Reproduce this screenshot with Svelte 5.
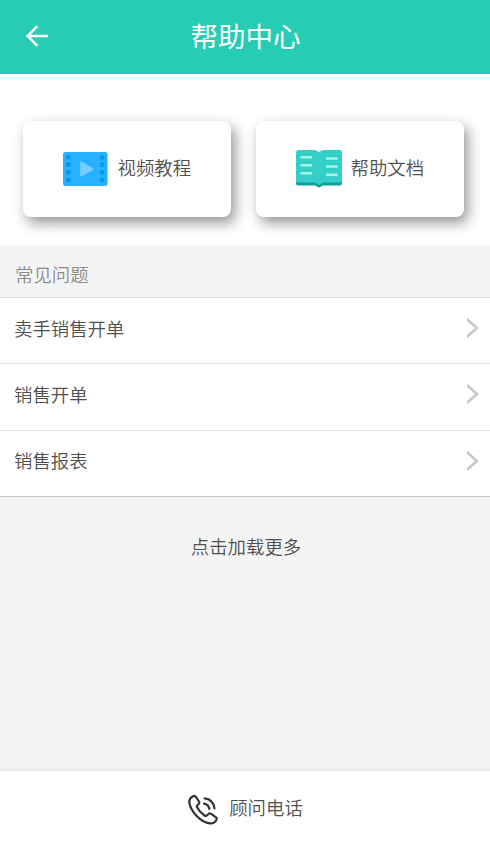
<script lang="ts">
  const questions: string[] = ['卖手销售开单', '销售开单', '销售报表'];
  const holes = [5.3, 12.7, 20.3, 28.2];
</script>

<div class="page">
  <header>
    <button class="back" aria-label="返回">
      <svg width="22" height="22" viewBox="0 0 22 22">
        <path d="M11.3 1.2L1.5 11l9.8 9.8M1.8 11H22" fill="none" stroke="#fff" stroke-width="2.6" />
      </svg>
    </button>
    <h1>帮助中心</h1>
  </header>

  <section class="cards">
    <button class="card">
      <svg class="video" width="45" height="34" viewBox="0 0 45 34">
        <rect x="0" y="0" width="44.5" height="34" rx="2.5" fill="#28b1ff" />
        {#each holes as y}
          <rect x="3" y={y - 2.4} width="4.8" height="4.8" rx="1.6" fill="#0798ed" />
          <rect x="36.6" y={y - 2.4} width="4.8" height="4.8" rx="1.6" fill="#0798ed" />
        {/each}
        <path d="M18.2 10.4v13.2L29.8 17z" fill="#76cdff" stroke="#76cdff" stroke-width="2" stroke-linejoin="round" />
      </svg>
      <span>视频教程</span>
    </button>
    <button class="card">
      <svg class="book" width="46" height="38" viewBox="0 0 46 38">
        <path d="M0 28h46v5.500q0 2-2 2H28q-2.200 0-3.400 1.300-1.600 1.600-3.200 0-1.200-1.300-3.400-1.300H2q-2 0-2-2z" fill="#0f9fa1" />
        <path d="M0 2.500Q0 0 2.500 0H18q3 0 5 2.200Q25 0 28 0h15.500q2.500 0 2.500 2.500V30.500q0 2-2 2H28q-2.200 0-5 2.500-2.800-2.500-5-2.500H2q-2 0-2-2z" fill="#34d0c8" />
        <path d="M5.500 7.200h9.500M5.500 15.200h9.500M5.500 23.300h9.500M31 8.500h9.500M31 16.500h9.500M31 24.800h9.500" stroke="#a5f5e9" stroke-width="2.600" stroke-linecap="round" />
      </svg>
      <span>帮助文档</span>
    </button>
  </section>

  <h2>常见问题</h2>
  <ul>
    {#each questions as question}
      <li>
        <span>{question}</span>
        <svg width="12" height="20" viewBox="0 0 12 20">
          <path d="M-1 .300L10 10-1 19.700" fill="none" stroke="#c8c8c8" stroke-width="2.600" />
        </svg>
      </li>
    {/each}
  </ul>

  <button class="more">点击加载更多</button>

  <footer>
    <svg width="30" height="31" viewBox="0 0 30 31" fill="none" stroke="#333" stroke-width="2.200" stroke-linecap="round" stroke-linejoin="round">
      <path d="M5 2.200C2.500 3.500 1 5.200 1.300 8.200C2.200 17 12.500 28.300 22 29.300C25 29.500 27.500 28 28.600 25.300Q29 24.200 28 23.300L22.800 19.700Q21.500 19 20.500 20L18.700 21.600Q17.700 22.300 16.500 21.500Q11.500 18 9 13.300Q8.500 12 9.400 11.200L10.800 9.800Q11.700 8.800 11 7.500L7.700 2.700Q6.500 1.400 5 2.200z" />
      <path d="M16 9.700q4.500.600 5.300 5.200M16.500 4.300q8.800.900 10 10" />
    </svg>
    <span>顾问电话</span>
  </footer>
</div>

<style>
  :global(body) {
    margin: 0;
  }

  .page {
    display: flex;
    flex-direction: column;
    height: 842px;
    background: #f4f4f4;
    color: #505050;
    font-family: "Noto Sans CJK SC", sans-serif;
    font-size: 18.4px;
    font-weight: 350;
    line-height: 28px;
  }

  button {
    border: 0;
    padding: 0;
    background: none;
    color: inherit;
    font: inherit;
  }

  header {
    display: grid;
    grid-template-columns: 74px 1fr 74px;
    align-items: center;
    height: 74px;
    background: #26cdb4;
    color: #fff;
  }

  .back {
    display: flex;
    padding-left: 26px;
    margin-top: -3px;
  }

  h1 {
    margin: 0 0 4px 1px;
    font-size: 27.5px;
    font-weight: 400;
    line-height: 40px;
    text-align: center;
  }

  .cards {
    display: flex;
    gap: 25px;
    box-sizing: border-box;
    height: 171px;
    padding: 47px 26px 27px 23px;
    background: #fff;
  }

  .card {
    display: flex;
    flex: 1;
    align-items: center;
    box-sizing: border-box;
    height: 96px;
    padding-left: 39.5px;
    border-radius: 8px;
    background: #fff;
    box-shadow: 4px 6px 14px rgba(0, 0, 0, 0.42);
  }

  .card span {
    margin: -5px 0 0 10px;
  }

  .card .book {
    margin-right: -1px;
  }

  h2 {
    box-sizing: border-box;
    height: 52px;
    margin: 0;
    padding: 15px 15px 0;
    color: #8b8b8b;
    font-size: inherit;
    font-weight: inherit;
  }

  ul {
    margin: 0;
    padding: 0;
    background: #fff;
    border-top: 1px solid #dedede;
    border-bottom: 1px solid #c8c8c8;
    list-style: none;
  }

  li {
    display: flex;
    align-items: center;
    justify-content: space-between;
    box-sizing: border-box;
    height: 65.2px;
    padding: 0 11px 5px 14px;
  }

  li + li {
    height: 66.4px;
    border-top: 1px solid #e2e2e2;
  }

  li span {
    margin-top: -1px;
  }

  .more {
    margin-top: 35px;
    padding-left: 2px;
  }

  footer {
    display: flex;
    align-items: center;
    justify-content: center;
    gap: 11px;
    height: 71px;
    margin-top: auto;
    background: #fff;
    box-shadow: 0 -1px 3px rgba(0, 0, 0, 0.09);
  }

  footer svg {
    margin: 6px 0 0 1px;
  }

  footer span {
    margin-top: 1px;
  }
</style>
